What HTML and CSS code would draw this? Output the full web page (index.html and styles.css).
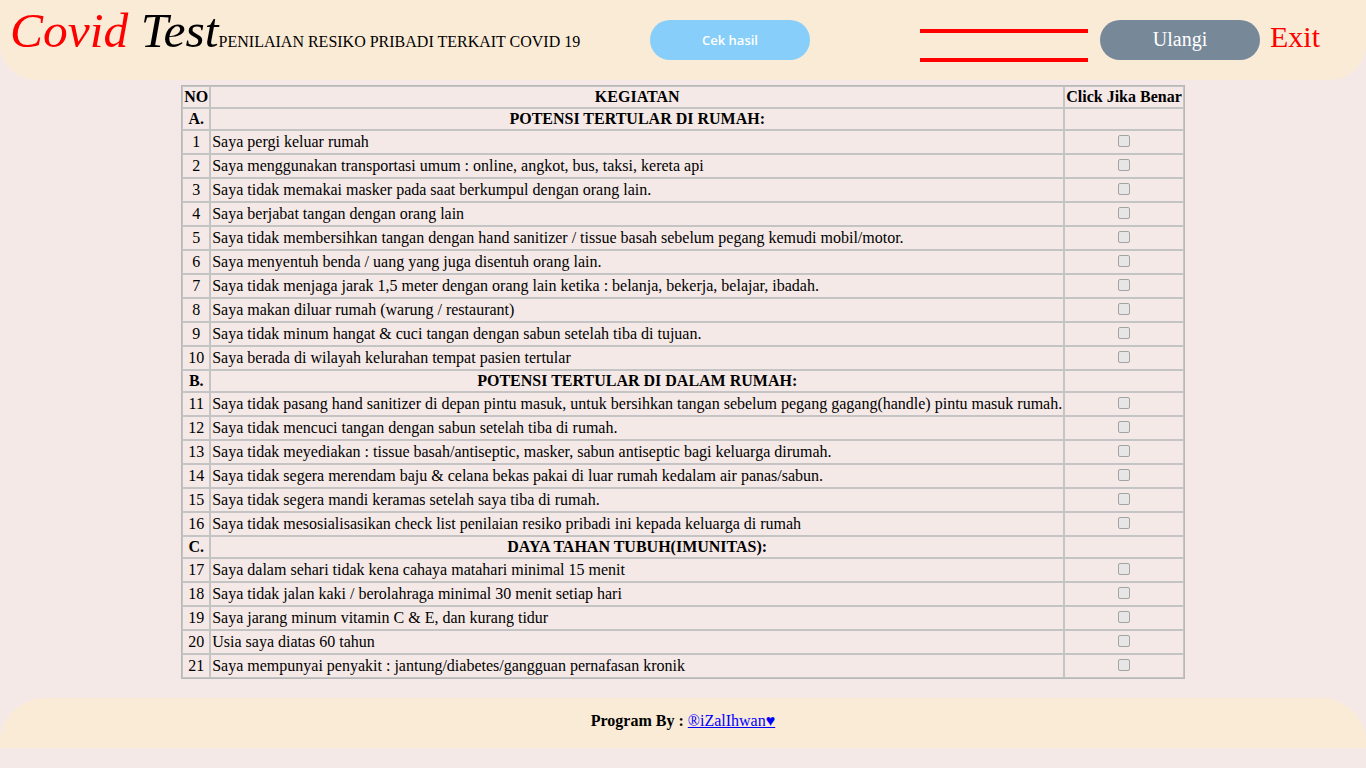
FILE: index.html
```html
<!DOCTYPE html>
<html lang="id">
<head>
    <meta charset="UTF-8">
    <meta name="viewport" content="width=device-width, initial-scale=1.0">
    <title>Covid Test</title>
    <link rel="stylesheet" href="styles.css">
</head>
<body>

    <!-- Header -->
    <div class="header">
        <h1 class="brand"><span class="covid">Covid</span> Test<span class="sub">PENILAIAN RESIKO PRIBADI TERKAIT COVID 19</span></h1>
        <button class="btn-cek" id="cekBtn">Cek hasil</button>
        <div class="hasil" id="hasil"></div>
        <button class="btn-ulangi" id="ulangiBtn">Ulangi</button>
        <a href="#" class="exit">Exit</a>
    </div>

    <!-- Tabel Pertanyaan -->
    <table class="tabel">
        <tr class="judul"><th>NO</th><th>KEGIATAN</th><th>Click Jika Benar</th></tr>

        <tr class="kategori"><th>A.</th><th>POTENSI TERTULAR DI RUMAH:</th><td></td></tr>
        <tr class="item"><td class="no">1</td><td>Saya pergi keluar rumah</td><td class="cek"><input type="checkbox"></td></tr>
        <tr class="item"><td class="no">2</td><td>Saya menggunakan transportasi umum : online, angkot, bus, taksi, kereta api</td><td class="cek"><input type="checkbox"></td></tr>
        <tr class="item"><td class="no">3</td><td>Saya tidak memakai masker pada saat berkumpul dengan orang lain.</td><td class="cek"><input type="checkbox"></td></tr>
        <tr class="item"><td class="no">4</td><td>Saya berjabat tangan dengan orang lain</td><td class="cek"><input type="checkbox"></td></tr>
        <tr class="item"><td class="no">5</td><td>Saya tidak membersihkan tangan dengan hand sanitizer / tissue basah sebelum pegang kemudi mobil/motor.</td><td class="cek"><input type="checkbox"></td></tr>
        <tr class="item"><td class="no">6</td><td>Saya menyentuh benda / uang yang juga disentuh orang lain.</td><td class="cek"><input type="checkbox"></td></tr>
        <tr class="item"><td class="no">7</td><td>Saya tidak menjaga jarak 1,5 meter dengan orang lain ketika : belanja, bekerja, belajar, ibadah.</td><td class="cek"><input type="checkbox"></td></tr>
        <tr class="item"><td class="no">8</td><td>Saya makan diluar rumah (warung / restaurant)</td><td class="cek"><input type="checkbox"></td></tr>
        <tr class="item"><td class="no">9</td><td>Saya tidak minum hangat &amp; cuci tangan dengan sabun setelah tiba di tujuan.</td><td class="cek"><input type="checkbox"></td></tr>
        <tr class="item"><td class="no">10</td><td>Saya berada di wilayah kelurahan tempat pasien tertular</td><td class="cek"><input type="checkbox"></td></tr>

        <tr class="kategori"><th>B.</th><th>POTENSI TERTULAR DI DALAM RUMAH:</th><td></td></tr>
        <tr class="item"><td class="no">11</td><td>Saya tidak pasang hand sanitizer di depan pintu masuk, untuk bersihkan tangan sebelum pegang gagang(handle) pintu masuk rumah.</td><td class="cek"><input type="checkbox"></td></tr>
        <tr class="item"><td class="no">12</td><td>Saya tidak mencuci tangan dengan sabun setelah tiba di rumah.</td><td class="cek"><input type="checkbox"></td></tr>
        <tr class="item"><td class="no">13</td><td>Saya tidak meyediakan : tissue basah/antiseptic, masker, sabun antiseptic bagi keluarga dirumah.</td><td class="cek"><input type="checkbox"></td></tr>
        <tr class="item"><td class="no">14</td><td>Saya tidak segera merendam baju &amp; celana bekas pakai di luar rumah kedalam air panas/sabun.</td><td class="cek"><input type="checkbox"></td></tr>
        <tr class="item"><td class="no">15</td><td>Saya tidak segera mandi keramas setelah saya tiba di rumah.</td><td class="cek"><input type="checkbox"></td></tr>
        <tr class="item"><td class="no">16</td><td>Saya tidak mesosialisasikan check list penilaian resiko pribadi ini kepada keluarga di rumah</td><td class="cek"><input type="checkbox"></td></tr>

        <tr class="kategori"><th>C.</th><th>DAYA TAHAN TUBUH(IMUNITAS):</th><td></td></tr>
        <tr class="item"><td class="no">17</td><td>Saya dalam sehari tidak kena cahaya matahari minimal 15 menit</td><td class="cek"><input type="checkbox"></td></tr>
        <tr class="item"><td class="no">18</td><td>Saya tidak jalan kaki / berolahraga minimal 30 menit setiap hari</td><td class="cek"><input type="checkbox"></td></tr>
        <tr class="item"><td class="no">19</td><td>Saya jarang minum vitamin C &amp; E, dan kurang tidur</td><td class="cek"><input type="checkbox"></td></tr>
        <tr class="item"><td class="no">20</td><td>Usia saya diatas 60 tahun</td><td class="cek"><input type="checkbox"></td></tr>
        <tr class="item"><td class="no">21</td><td>Saya mempunyai penyakit : jantung/diabetes/gangguan pernafasan kronik</td><td class="cek"><input type="checkbox"></td></tr>
    </table>

    <!-- Footer -->
    <div class="footer">
        <b>Program By : </b><a href="#">&reg;iZalIhwan&hearts;</a>
    </div>

    <script>
        const hasil = document.getElementById("hasil");
        const boxes = document.querySelectorAll(".cek input");

        // Hitung jawaban yang dicentang
        document.getElementById("cekBtn").addEventListener("click", () => {
            let skor = 0;
            boxes.forEach(b => { if (b.checked) skor++; });
            if (skor <= 7) hasil.innerText = "Resiko Rendah";
            else if (skor <= 14) hasil.innerText = "Resiko Sedang";
            else hasil.innerText = "Resiko Tinggi";
        });

        document.getElementById("ulangiBtn").addEventListener("click", () => {
            boxes.forEach(b => b.checked = false);
            hasil.innerText = "";
        });
    </script>

</body>
</html>
```

FILE: styles.css
```css
* {
    box-sizing: border-box;
}

body {
    margin: 0;
    background: #f5e9e7;
    font-family: "Liberation Serif", "Times New Roman", serif;
    font-size: 16px;
    color: #000;
}

/* Header */
.header {
    display: flex;
    align-items: flex-start;
    height: 80px;
    padding-left: 10px;
    background: #faebd7;
    border-radius: 0 0 36px 36px;
}

.brand {
    width: 640px;
    margin: 2px 0 0 0;
    font-size: 49.5px;
    font-weight: normal;
    font-style: italic;
    white-space: nowrap;
}

.covid {
    color: red;
}

.sub {
    font-size: 16px;
    font-style: normal;
}

.btn-cek,
.btn-ulangi {
    width: 160px;
    height: 40px;
    margin-top: 20px;
    border: none;
    border-radius: 20px;
    color: white;
    cursor: pointer;
}

.btn-cek {
    background: #87cefa;
    font-family: "Open Sans", "DejaVu Sans", sans-serif;
    font-size: 13px;
    font-weight: 600;
}

.hasil {
    width: 168px;
    height: 33px;
    margin: 29px 0 0 110px;
    border-top: 4px solid red;
    border-bottom: 4px solid red;
    color: red;
    text-align: center;
    line-height: 25px;
}

.btn-ulangi {
    margin-left: 12px;
    padding-bottom: 3px;
    background: #778899;
    font-family: "Liberation Serif", serif;
    font-size: 20px;
}

.exit {
    margin: 20px 0 0 10px;
    color: red;
    font-size: 30px;
    text-decoration: none;
}

/* Tabel */
.tabel {
    margin: 5px auto 0;
    border: 1px solid #b8b8b8;
    border-spacing: 0;
}

.tabel th,
.tabel td {
    padding: 1px;
    border: 1px solid #c4c4c4;
}

.tabel tr {
    height: 22px;
}

.tabel tr.item {
    height: 24px;
}

.tabel .no,
.tabel .cek {
    text-align: center;
}

.cek input {
    appearance: none;
    display: block;
    width: 12px;
    height: 12px;
    margin: 0 auto 2px;
    border: 1px solid #a3a3a3;
    border-radius: 2px;
    background: #e6e6e6;
    cursor: pointer;
}

.cek input:checked {
    background: #0075ff;
    border-color: #0075ff;
}

/* Footer */
.footer {
    height: 50px;
    margin-top: 19px;
    padding-top: 14px;
    background: #faebd7;
    border-radius: 45px 45px 0 0;
    text-align: center;
}

.footer a {
    color: blue;
}
```
